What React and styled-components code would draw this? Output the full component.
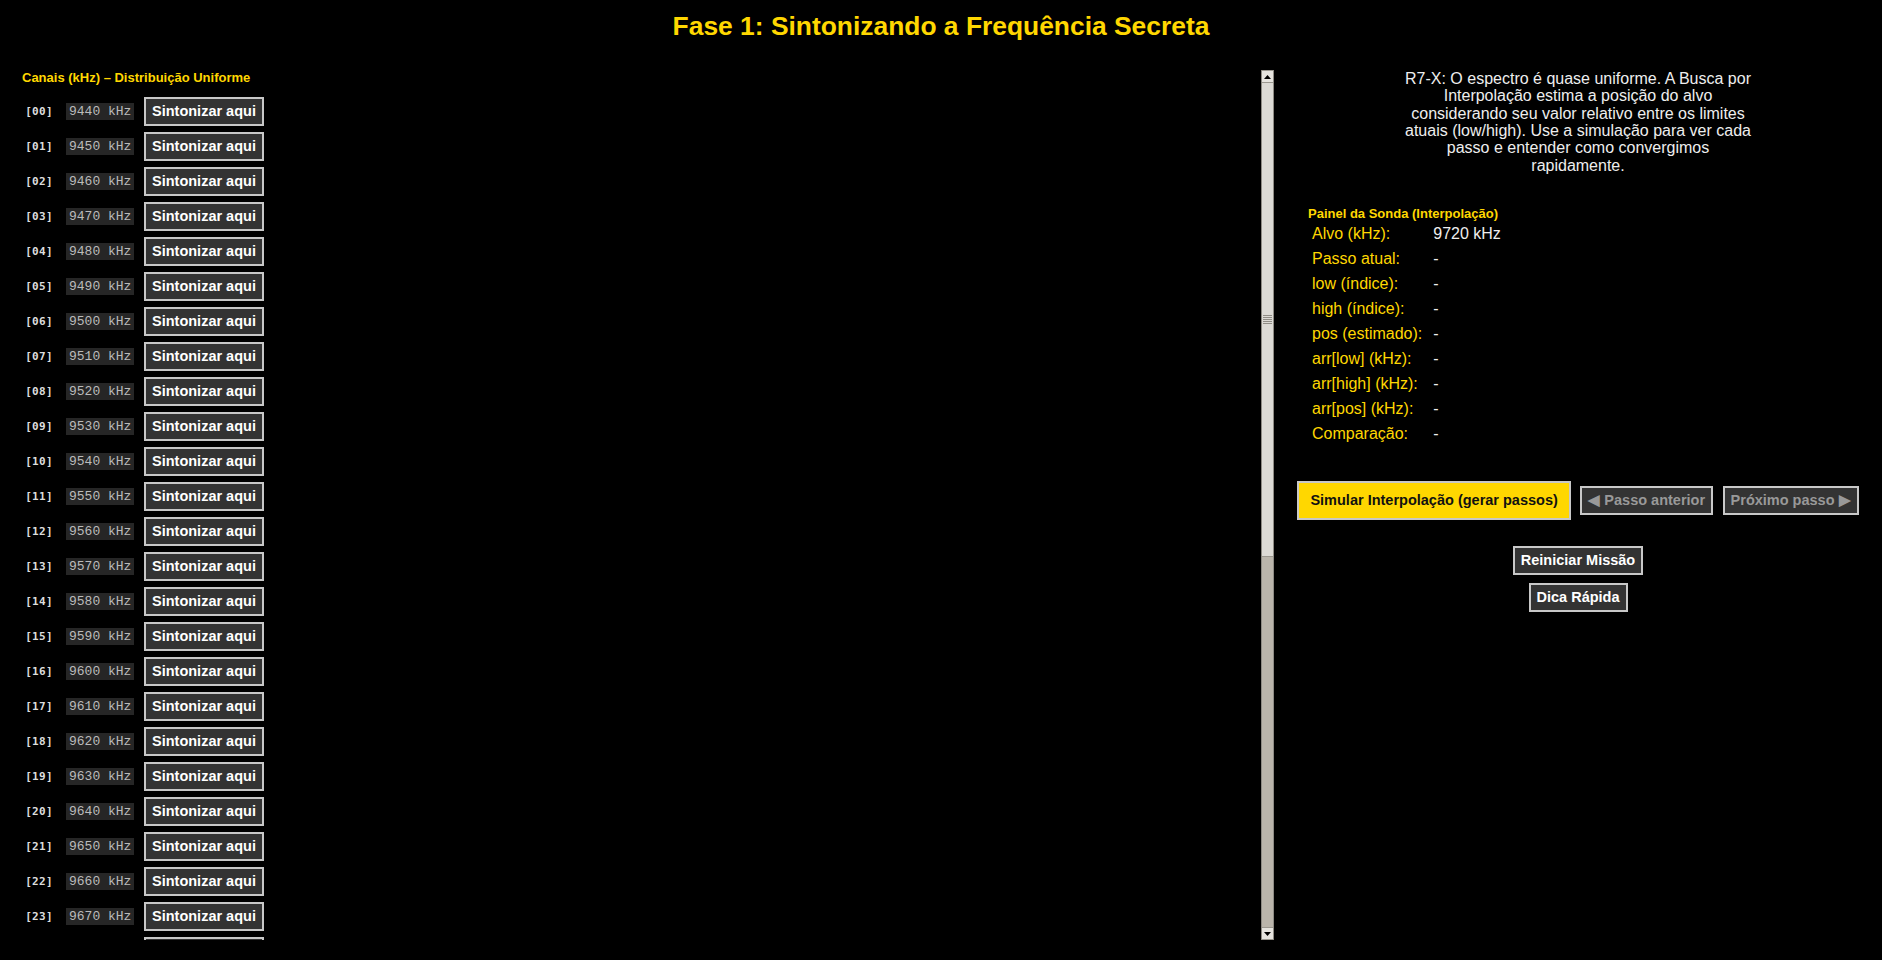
import React from 'react';
import styled, { createGlobalStyle, css } from 'styled-components';

const GlobalStyle = createGlobalStyle`
  html, body {
    margin: 0;
    padding: 0;
    background: #000;
  }
  body {
    font-family: "Liberation Sans", Arial, sans-serif;
    color: #eee;
  }
`;

const GOLD = '#ffd700';

const Page = styled.div`
  display: flex;
  flex-direction: column;
  height: 960px;
  overflow: hidden;
`;

const Title = styled.h1`
  margin: 11px 0 29px;
  font-size: 26.4px;
  line-height: 30px;
  font-weight: 700;
  color: ${GOLD};
  text-align: center;
`;

const Main = styled.div`
  display: flex;
  height: 870px;
`;

// Left side: the channel list plus its (drawn) scrollbar
const ChannelPanel = styled.div`
  flex: 0 0 1274px;
  display: flex;
  height: 100%;
`;

const ChannelScroll = styled.div`
  flex: 1;
  box-sizing: border-box;
  height: 100%;
  overflow-y: auto;
  padding: 0 0 20px 22px;
  scrollbar-width: none;
  &::-webkit-scrollbar {
    display: none;
  }
`;

const ScrollBar = styled.div`
  flex: 0 0 13px;
  display: flex;
  flex-direction: column;
  box-sizing: border-box;
  border-left: 1px solid #8e8b84;
  border-right: 1px solid #8e8b84;
  background: #bab5ab;
`;

const ScrollButton = styled.div`
  flex: 0 0 13px;
  display: flex;
  align-items: center;
  justify-content: center;
  box-sizing: border-box;
  border-top: 1px solid #9a978f;
  border-bottom: 1px solid #9a978f;
  background: #e6e4df;
`;

const ScrollTrack = styled.div`
  flex: 1;
  display: flex;
  flex-direction: column;
`;

const ScrollThumb = styled.div`
  flex: 0 0 ${(p) => p.$size}px;
  display: flex;
  align-items: center;
  justify-content: center;
  box-sizing: border-box;
  border-bottom: 1px solid #9a978f;
  background: #dcdad5;
`;

const Grip = styled.div`
  width: 9px;
  height: 9px;
  background: repeating-linear-gradient(to bottom, #8f8c85 0 1px, transparent 1px 2px);
`;

const SectionTitle = styled.h3`
  margin: 0 0 ${(p) => p.$gap || 0}px;
  font-size: 13px;
  line-height: 15px;
  font-weight: 700;
  color: ${GOLD};
`;

const ChannelList = styled.div`
  display: flex;
  flex-direction: column;
`;

const ChannelRow = styled.div`
  display: flex;
  align-items: center;
  gap: 10px;
  height: 35px;
`;

const Index = styled.span`
  width: 34px;
  text-align: center;
  font-family: "DejaVu Sans Mono", monospace;
  font-size: 11px;
  font-weight: 700;
  letter-spacing: 0.3px;
  color: #ddd;
`;

const Freq = styled.span`
  width: 68px;
  box-sizing: border-box;
  padding: 1px 3px;
  background: #262626;
  font-family: "Liberation Mono", "Courier New", monospace;
  font-size: 13px;
  line-height: 15.4px;
  color: #bbb;
  white-space: nowrap;
`;

const Button = styled.button`
  box-sizing: border-box;
  margin: 0;
  padding: 4px 6px;
  border: 2px solid #c8c8c8;
  border-radius: 0;
  background: #333;
  color: #fff;
  font-family: "Liberation Sans", Arial, sans-serif;
  font-size: 14.5px;
  line-height: 17.3px;
  font-weight: 700;
  white-space: nowrap;
  cursor: pointer;

  ${(p) =>
    p.$primary &&
    css`
      padding: 9px 11px;
      background: ${GOLD};
      color: #111;
    `}

  &:disabled {
    color: #999;
    cursor: default;
  }
`;

// Right side: briefing, probe table and controls
const SidePanel = styled.div`
  flex: 1;
  display: flex;
  flex-direction: column;
  align-items: center;
`;

const Briefing = styled.p`
  width: 354px;
  margin: 0;
  font-size: 16px;
  line-height: 17.33px;
  text-align: center;
  color: #eee;
`;

const Probe = styled.div`
  align-self: stretch;
  margin-top: 32px;
  padding-left: 34px;
`;

const ProbeGrid = styled.div`
  display: grid;
  grid-template-columns: auto 1fr;
  grid-auto-rows: 25px;
  column-gap: 11px;
  align-items: center;
  padding-left: 4px;
  font-size: 16px;
`;

const ProbeLabel = styled.span`
  color: ${GOLD};
`;

const ProbeValue = styled.span`
  color: #eee;
`;

const Controls = styled.div`
  display: flex;
  align-items: center;
  justify-content: center;
  gap: 9.5px;
  margin-top: 34px;
`;

const Extra = styled.div`
  display: flex;
  flex-direction: column;
  align-items: center;
  gap: 7.7px;
  margin-top: 25.4px;
`;

const channels = Array.from({ length: 43 }, (_, i) => 9440 + i * 10);

const probe = [
  ['Alvo (kHz):', '9720 kHz'],
  ['Passo atual:', '-'],
  ['low (índice):', '-'],
  ['high (índice):', '-'],
  ['pos (estimado):', '-'],
  ['arr[low] (kHz):', '-'],
  ['arr[high] (kHz):', '-'],
  ['arr[pos] (kHz):', '-'],
  ['Comparação:', '-'],
];

const pad = (n) => String(n).padStart(2, '0');

const Arrow = ({ down }) => (
  <svg width="7" height="4" viewBox="0 0 7 4">
    <polygon points={down ? '0,0 7,0 3.5,4' : '0,4 7,4 3.5,0'} fill="#000" />
  </svg>
);

// visible height 870, content ~1549 -> thumb share of the 844px track
const THUMB = Math.round((870 / 1549) * 844);

const App = () => {
  return (
    <Page>
      <GlobalStyle />
      <Title>Fase 1: Sintonizando a Frequência Secreta</Title>

      <Main>
        <ChannelPanel>
          <ChannelScroll>
            <SectionTitle $gap={9}>Canais (kHz) – Distribuição Uniforme</SectionTitle>
            <ChannelList>
              {channels.map((khz, i) => (
                <ChannelRow key={khz}>
                  <Index>[{pad(i)}]</Index>
                  <Freq>{khz} kHz</Freq>
                  <Button>Sintonizar aqui</Button>
                </ChannelRow>
              ))}
            </ChannelList>
          </ChannelScroll>

          <ScrollBar>
            <ScrollButton>
              <Arrow />
            </ScrollButton>
            <ScrollTrack>
              <ScrollThumb $size={THUMB}>
                <Grip />
              </ScrollThumb>
            </ScrollTrack>
            <ScrollButton>
              <Arrow down />
            </ScrollButton>
          </ScrollBar>
        </ChannelPanel>

        <SidePanel>
          <Briefing>
            R7-X: O espectro é quase uniforme. A Busca por Interpolação estima a
            posição do alvo considerando seu valor relativo entre os limites
            atuais (low/high). Use a simulação para ver cada passo e entender
            como convergimos rapidamente.
          </Briefing>

          <Probe>
            <SectionTitle $gap={1}>Painel da Sonda (Interpolação)</SectionTitle>
            <ProbeGrid>
              {probe.map(([label, value]) => (
                <React.Fragment key={label}>
                  <ProbeLabel>{label}</ProbeLabel>
                  <ProbeValue>{value}</ProbeValue>
                </React.Fragment>
              ))}
            </ProbeGrid>
          </Probe>

          <Controls>
            <Button $primary>Simular Interpolação (gerar passos)</Button>
            <Button disabled>◀ Passo anterior</Button>
            <Button disabled>Próximo passo ▶</Button>
          </Controls>

          <Extra>
            <Button>Reiniciar Missão</Button>
            <Button>Dica Rápida</Button>
          </Extra>
        </SidePanel>
      </Main>
    </Page>
  );
};

export default App;
